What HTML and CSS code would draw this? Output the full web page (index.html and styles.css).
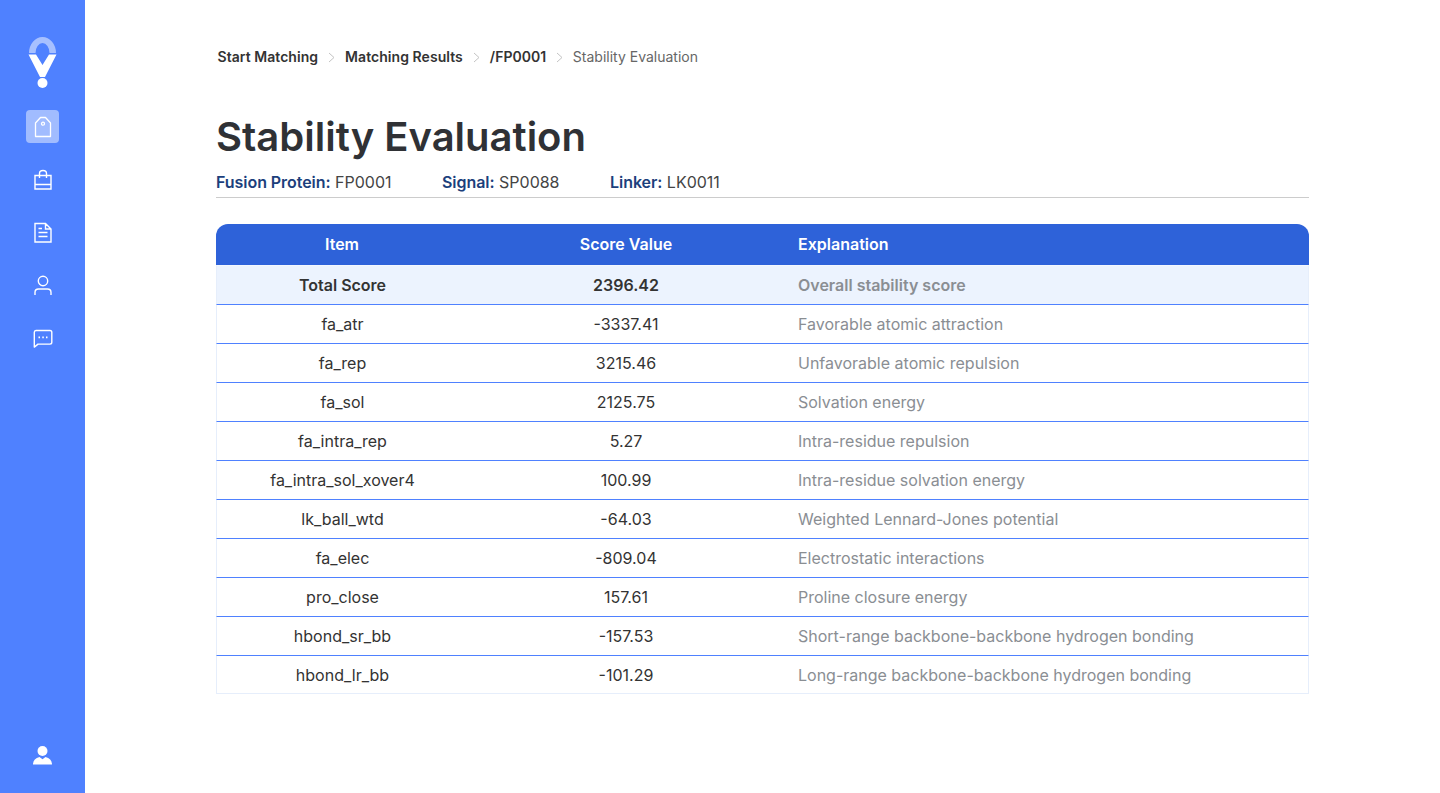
FILE: index.html
```html
<!DOCTYPE html>
<html lang="en">
<head>
    <meta charset="UTF-8">
    <meta name="viewport" content="width=device-width, initial-scale=1.0">
    <title>Stability Evaluation</title>
    <link rel="stylesheet" href="styles.css">
</head>
<body>
    <aside class="sidebar">
        <svg class="logo" width="30" height="52" viewBox="0 0 30 52">
            <path d="M1 16A13.500 16 0 0 1 28 16H21.500A7 10 0 0 0 7.500 16z" fill="#fff" fill-opacity=".5"/>
            <path d="M.5 17.500H8L14.500 28 21 17.500h7.500L17 40h-5z" fill="#fff"/>
            <circle cx="14.500" cy="46" r="5" fill="#fff"/>
        </svg>
        <nav class="side-nav">
            <a class="side-link active" href="#">
                <svg width="20" height="22" viewBox="0 0 20 22" fill="none" stroke="#fff" stroke-width="1.300">
                    <path d="M7.500 1.500h5L17.500 7v13.500h-15V7z" stroke-linejoin="round"/>
                    <circle cx="10" cy="7.700" r="1.500"/>
                </svg>
            </a>
            <a class="side-link" href="#">
                <svg width="20" height="22" viewBox="0 0 20 22" fill="none" stroke="#fff" stroke-width="1.400">
                    <path d="M2 6.500h16V20H2zM2 15.500h16M6.500 9V4.500C6.500 2.500 8 1.500 10 1.500s3.500 1 3.500 3V9"/>
                </svg>
            </a>
            <a class="side-link" href="#">
                <svg width="20" height="22" viewBox="0 0 20 22" fill="none" stroke="#fff" stroke-width="1.400">
                    <path d="M2 1.500h10.500L18 7v13H2zM12.500 1.500V7H18M5.500 6.500h3.500M5.500 10.500h9M5.500 14.500h9"/>
                </svg>
            </a>
            <a class="side-link" href="#">
                <svg width="20" height="22" viewBox="0 0 20 22" fill="none" stroke="#fff" stroke-width="1.400">
                    <circle cx="10" cy="6" r="4.700"/>
                    <path d="M2 20v-2.500C2 15.500 3.500 14 5.500 14h9c2 0 3.500 1.500 3.500 3.500V20"/>
                </svg>
            </a>
            <a class="side-link" href="#">
                <svg width="20" height="22" viewBox="0 0 20 22" fill="none" stroke="#fff" stroke-width="1.400">
                    <path d="M3 2.500h14a1.800 1.800 0 0 1 1.800 1.800v10a1.800 1.800 0 0 1-1.800 1.800H5l-3.700 3V4.300A1.800 1.800 0 0 1 3 2.500z" stroke-linejoin="round"/>
                    <path d="M5.500 9.300h1.500M9.300 9.300h1.500M13 9.300h1.500" stroke-width="1.700"/>
                </svg>
            </a>
        </nav>
        <svg class="account" width="20" height="20" viewBox="0 0 20 20" fill="#fff">
            <circle cx="9.500" cy="6" r="5"/>
            <path d="M0 19.500c0-3.800 2.300-6.500 6.500-7.500l3 2.200 3-2.200c4.200 1 6.500 3.700 6.500 7.500z"/>
        </svg>
    </aside>

    <main class="content">
        <div class="breadcrumb">
            <a href="#">Start Matching</a>
            <svg class="crumb-arrow" width="7" height="11" viewBox="0 0 7 11"><path d="M1 1l5 4.500L1 10" fill="none" stroke="#c4c4c4"/></svg>
            <a href="#">Matching Results</a>
            <svg class="crumb-arrow" width="7" height="11" viewBox="0 0 7 11"><path d="M1 1l5 4.500L1 10" fill="none" stroke="#c4c4c4"/></svg>
            <a href="#">/FP0001</a>
            <svg class="crumb-arrow" width="7" height="11" viewBox="0 0 7 11"><path d="M1 1l5 4.500L1 10" fill="none" stroke="#c4c4c4"/></svg>
            <span>Stability Evaluation</span>
        </div>

        <h1>Stability Evaluation</h1>

        <div class="meta">
            <span><b>Fusion Protein:</b> FP0001</span>
            <span><b>Signal:</b> SP0088</span>
            <span><b>Linker:</b> LK0011</span>
        </div>

        <table class="score-table">
            <colgroup>
                <col class="col-item">
                <col class="col-score">
                <col>
            </colgroup>
            <thead>
                <tr><th>Item</th><th>Score Value</th><th>Explanation</th></tr>
            </thead>
            <tbody>
                <tr class="total"><td>Total Score</td><td>2396.42</td><td>Overall stability score</td></tr>
                <tr><td>fa_atr</td><td>-3337.41</td><td>Favorable atomic attraction</td></tr>
                <tr><td>fa_rep</td><td>3215.46</td><td>Unfavorable atomic repulsion</td></tr>
                <tr><td>fa_sol</td><td>2125.75</td><td>Solvation energy</td></tr>
                <tr><td>fa_intra_rep</td><td>5.27</td><td>Intra-residue repulsion</td></tr>
                <tr><td>fa_intra_sol_xover4</td><td>100.99</td><td>Intra-residue solvation energy</td></tr>
                <tr><td>lk_ball_wtd</td><td>-64.03</td><td>Weighted Lennard-Jones potential</td></tr>
                <tr><td>fa_elec</td><td>-809.04</td><td>Electrostatic interactions</td></tr>
                <tr><td>pro_close</td><td>157.61</td><td>Proline closure energy</td></tr>
                <tr><td>hbond_sr_bb</td><td>-157.53</td><td>Short-range backbone-backbone hydrogen bonding</td></tr>
                <tr><td>hbond_lr_bb</td><td>-101.29</td><td>Long-range backbone-backbone hydrogen bonding</td></tr>
            </tbody>
        </table>
    </main>
</body>
</html>
```

FILE: styles.css
```css
html, body {
    height: 100%;
}
body {
    font-family: Inter, "Liberation Sans", sans-serif;
    background-color: #fff;
    color: #333;
    margin: 0;
    padding: 0;
    display: flex;
    overflow: hidden;
}
a {
    color: inherit;
    text-decoration: none;
}

.sidebar {
    width: 85px;
    flex: none;
    height: 793px;
    background-color: #4f81ff;
    display: flex;
    flex-direction: column;
    align-items: center;
    padding: 37px 0 28px;
    box-sizing: border-box;
}
.side-nav {
    display: flex;
    flex-direction: column;
    gap: 20px;
    margin-top: 21px;
}
.side-link {
    width: 33px;
    height: 33px;
    border-radius: 4px;
    display: flex;
    align-items: center;
    justify-content: center;
}
.side-link.active {
    background-color: rgba(255, 255, 255, 0.47);
}
.account {
    margin-top: auto;
}

.content {
    flex: 1;
    padding: 48px 131px 0;
    min-width: 0;
}
.breadcrumb {
    display: flex;
    align-items: center;
    font-size: 14px;
    line-height: 18px;
    font-weight: 600;
    letter-spacing: 0.05px;
    padding-left: 1.500px;
}
.breadcrumb span {
    font-weight: 400;
    letter-spacing: 0;
    color: #666;
    margin-left: -0.500px;
}
.crumb-arrow {
    margin: 0 10px;
}
h1 {
    font-size: 40px;
    line-height: 48px;
    font-weight: 600;
    color: #2f3135;
    margin: 47px 0 0;
}
.meta {
    display: flex;
    gap: 50.500px;
    font-size: 16px;
    line-height: 20px;
    color: #444;
    margin-top: 11px;
    padding-bottom: 5px;
    border-bottom: 1px solid #ccc;
}
.meta b {
    font-weight: 600;
    letter-spacing: -0.05px;
    color: #1c3f7c;
}

.score-table {
    width: 1093px;
    margin-top: 26px;
    border-collapse: separate;
    border-spacing: 0;
    table-layout: fixed;
    font-size: 16px;
}
.col-item {
    width: 252px;
}
.col-score {
    width: 316px;
}
.score-table th {
    height: 39px;
    padding: 0 0 2px;
    background-color: #2e62d9;
    color: #fff;
    font-weight: 600;
    text-align: center;
}
.score-table th:first-child {
    border-top-left-radius: 12px;
}
.score-table th:last-child {
    border-top-right-radius: 12px;
    text-align: left;
    padding-left: 14px;
}
.score-table td {
    height: 38px;
    padding: 0;
    text-align: center;
    border-top: 1px solid #4f81ff;
}
.score-table td:first-child {
    border-left: 1px solid #e6eefb;
}
.score-table td:last-child {
    text-align: left;
    padding-left: 14px;
    color: #8a8e93;
    border-right: 1px solid #e6eefb;
}
.score-table tr:last-child td {
    height: 37px;
    border-bottom: 1px solid #e6eefb;
}
.total td {
    background-color: #ecf3fe;
    font-weight: 600;
    border-top-color: #f3f7fe;
}
```
